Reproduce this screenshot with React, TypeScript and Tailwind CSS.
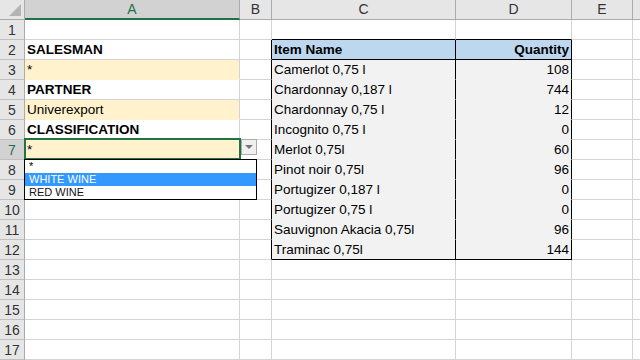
const items: [string, number][] = [
  ["Camerlot 0,75 l", 108],
  ["Chardonnay 0,187 l", 744],
  ["Chardonnay 0,75 l", 12],
  ["Incognito 0,75 l", 0],
  ["Merlot 0,75l", 60],
  ["Pinot noir 0,75l", 96],
  ["Portugizer 0,187 l", 0],
  ["Portugizer 0,75 l", 0],
  ["Sauvignon Akacia 0,75l", 96],
  ["Traminac 0,75l", 144],
];

const colA: Record<number, { text: string; bold?: boolean; fill?: boolean }> = {
  2: { text: "SALESMAN", bold: true },
  3: { text: "*", fill: true },
  4: { text: "PARTNER", bold: true },
  5: { text: "Univerexport", fill: true },
  6: { text: "CLASSIFICATION", bold: true },
  7: { text: "*", fill: true },
};

function HeaderRow() {
  return (
    <div className="flex h-[20px] bg-[#e6e6e6] text-[14px] text-[#333]">
      <div className="relative w-[25px] shrink-0 border-b border-r border-[#ababab]">
        <div className="absolute bottom-[3px] right-[3px] h-0 w-0 border-b-[12px] border-l-[12px] border-b-[#b4b4b4] border-l-transparent" />
      </div>
      <div className="flex w-[215px] shrink-0 items-center justify-center border-b-2 border-r border-b-[#217346] border-r-[#ababab] bg-[#d2d2d2] text-[#217346]">
        A
      </div>
      <div className="flex w-[32px] shrink-0 items-center justify-center border-b border-r border-[#ababab]">B</div>
      <div className="flex w-[184px] shrink-0 items-center justify-center border-b border-r border-[#ababab]">C</div>
      <div className="flex w-[116px] shrink-0 items-center justify-center border-b border-r border-[#ababab]">D</div>
      <div className="flex w-[61px] shrink-0 items-center justify-center border-b border-r border-[#ababab]">E</div>
      <div className="flex-1 border-b border-[#ababab]" />
    </div>
  );
}

function Row({ n }: { n: number }) {
  const a = colA[n];
  const inTable = n >= 2 && n <= 12;
  const item = n >= 3 && n <= 12 ? items[n - 3] : null;
  const selected = n === 7;

  // bottom border of table cells
  let tb = "border-b-[#d4d4d4]";
  if (n === 1 || n === 2 || n === 12) tb = "border-b-black";
  else if (inTable) tb = "border-b-[#f2f2f2]";
  const tbg = n === 2 ? "bg-[#bdd7ee]" : inTable ? "bg-[#f2f2f2]" : "bg-white";
  const tr = inTable ? "border-r-black" : "border-r-[#d4d4d4]";

  return (
    <div className="flex h-[20px] text-[13.5px] leading-[16px] text-black">
      <div
        className={
          selected
            ? "flex w-[25px] shrink-0 items-end justify-center border-b border-r border-b-[#bfbfbf] border-r-[#217346] bg-[#d2d2d2] pb-[1px] text-[14px] text-[#217346]"
            : "flex w-[25px] shrink-0 items-end justify-center border-b border-r border-b-[#bfbfbf] border-r-[#ababab] bg-[#e6e6e6] pb-[1px] text-[14px] text-[#333]"
        }
      >
        {n}
      </div>
      <div
        className={
          (a?.fill ? "bg-[#fff2cc] border-b-[#fff2cc] " : "bg-white border-b-[#d4d4d4] ") +
          "flex w-[215px] shrink-0 items-end border-b border-r border-r-[#d4d4d4] pb-[1px] pl-[2px] " +
          (a?.bold ? "font-bold" : "")
        }
      >
        {a?.text}
      </div>
      <div className={"w-[32px] shrink-0 border-b border-r border-b-[#d4d4d4] " + tr} />
      <div
        className={
          "flex w-[184px] shrink-0 items-end border-b border-r pb-[1px] pl-[2px] " +
          tb + " " + tr + " " + tbg + (n === 2 ? " font-bold" : "")
        }
      >
        {n === 2 ? "Item Name" : item?.[0]}
      </div>
      <div
        className={
          "flex w-[116px] shrink-0 items-end justify-end border-b border-r pb-[1px] pr-[2px] " +
          tb + " " + tr + " " + tbg + (n === 2 ? " font-bold" : "")
        }
      >
        {n === 2 ? "Quantity" : item?.[1]}
      </div>
      <div className="w-[61px] shrink-0 border-b border-r border-[#d4d4d4]" />
      <div className="flex-1 border-b border-[#d4d4d4]" />
    </div>
  );
}

export default function App() {
  const rows = Array.from({ length: 17 }, (_, i) => i + 1);
  return (
    <div className="relative h-[360px] w-[640px] overflow-hidden bg-white font-['Liberation_Sans',Arial,sans-serif]">
      <HeaderRow />
      {rows.map((n) => (
        <Row key={n} n={n} />
      ))}

      {/* active cell A7 */}
      <div className="pointer-events-none absolute left-[24px] top-[138px] h-[22px] w-[217px] border-2 border-[#217346]" />

      {/* dropdown button */}
      <div className="absolute left-[241px] top-[139px] flex h-[16px] w-[16px] items-center justify-center border border-[#ababab] bg-[#f0f0f0]">
        <div className="h-0 w-0 border-l-[4px] border-r-[4px] border-t-[4px] border-l-transparent border-r-transparent border-t-[#777]" />
      </div>

      {/* validation list */}
      <div className="absolute left-[24px] top-[159px] h-[41px] w-[233px] border border-black bg-white text-[11px] leading-[13px]">
        <div className="h-[13px] pl-[4px] text-black">*</div>
        <div className="h-[13px] bg-[#3399ff] pl-[4px] text-white">WHITE WINE</div>
        <div className="h-[13px] pl-[4px] text-[#1a1020]">RED WINE</div>
      </div>
    </div>
  );
}
